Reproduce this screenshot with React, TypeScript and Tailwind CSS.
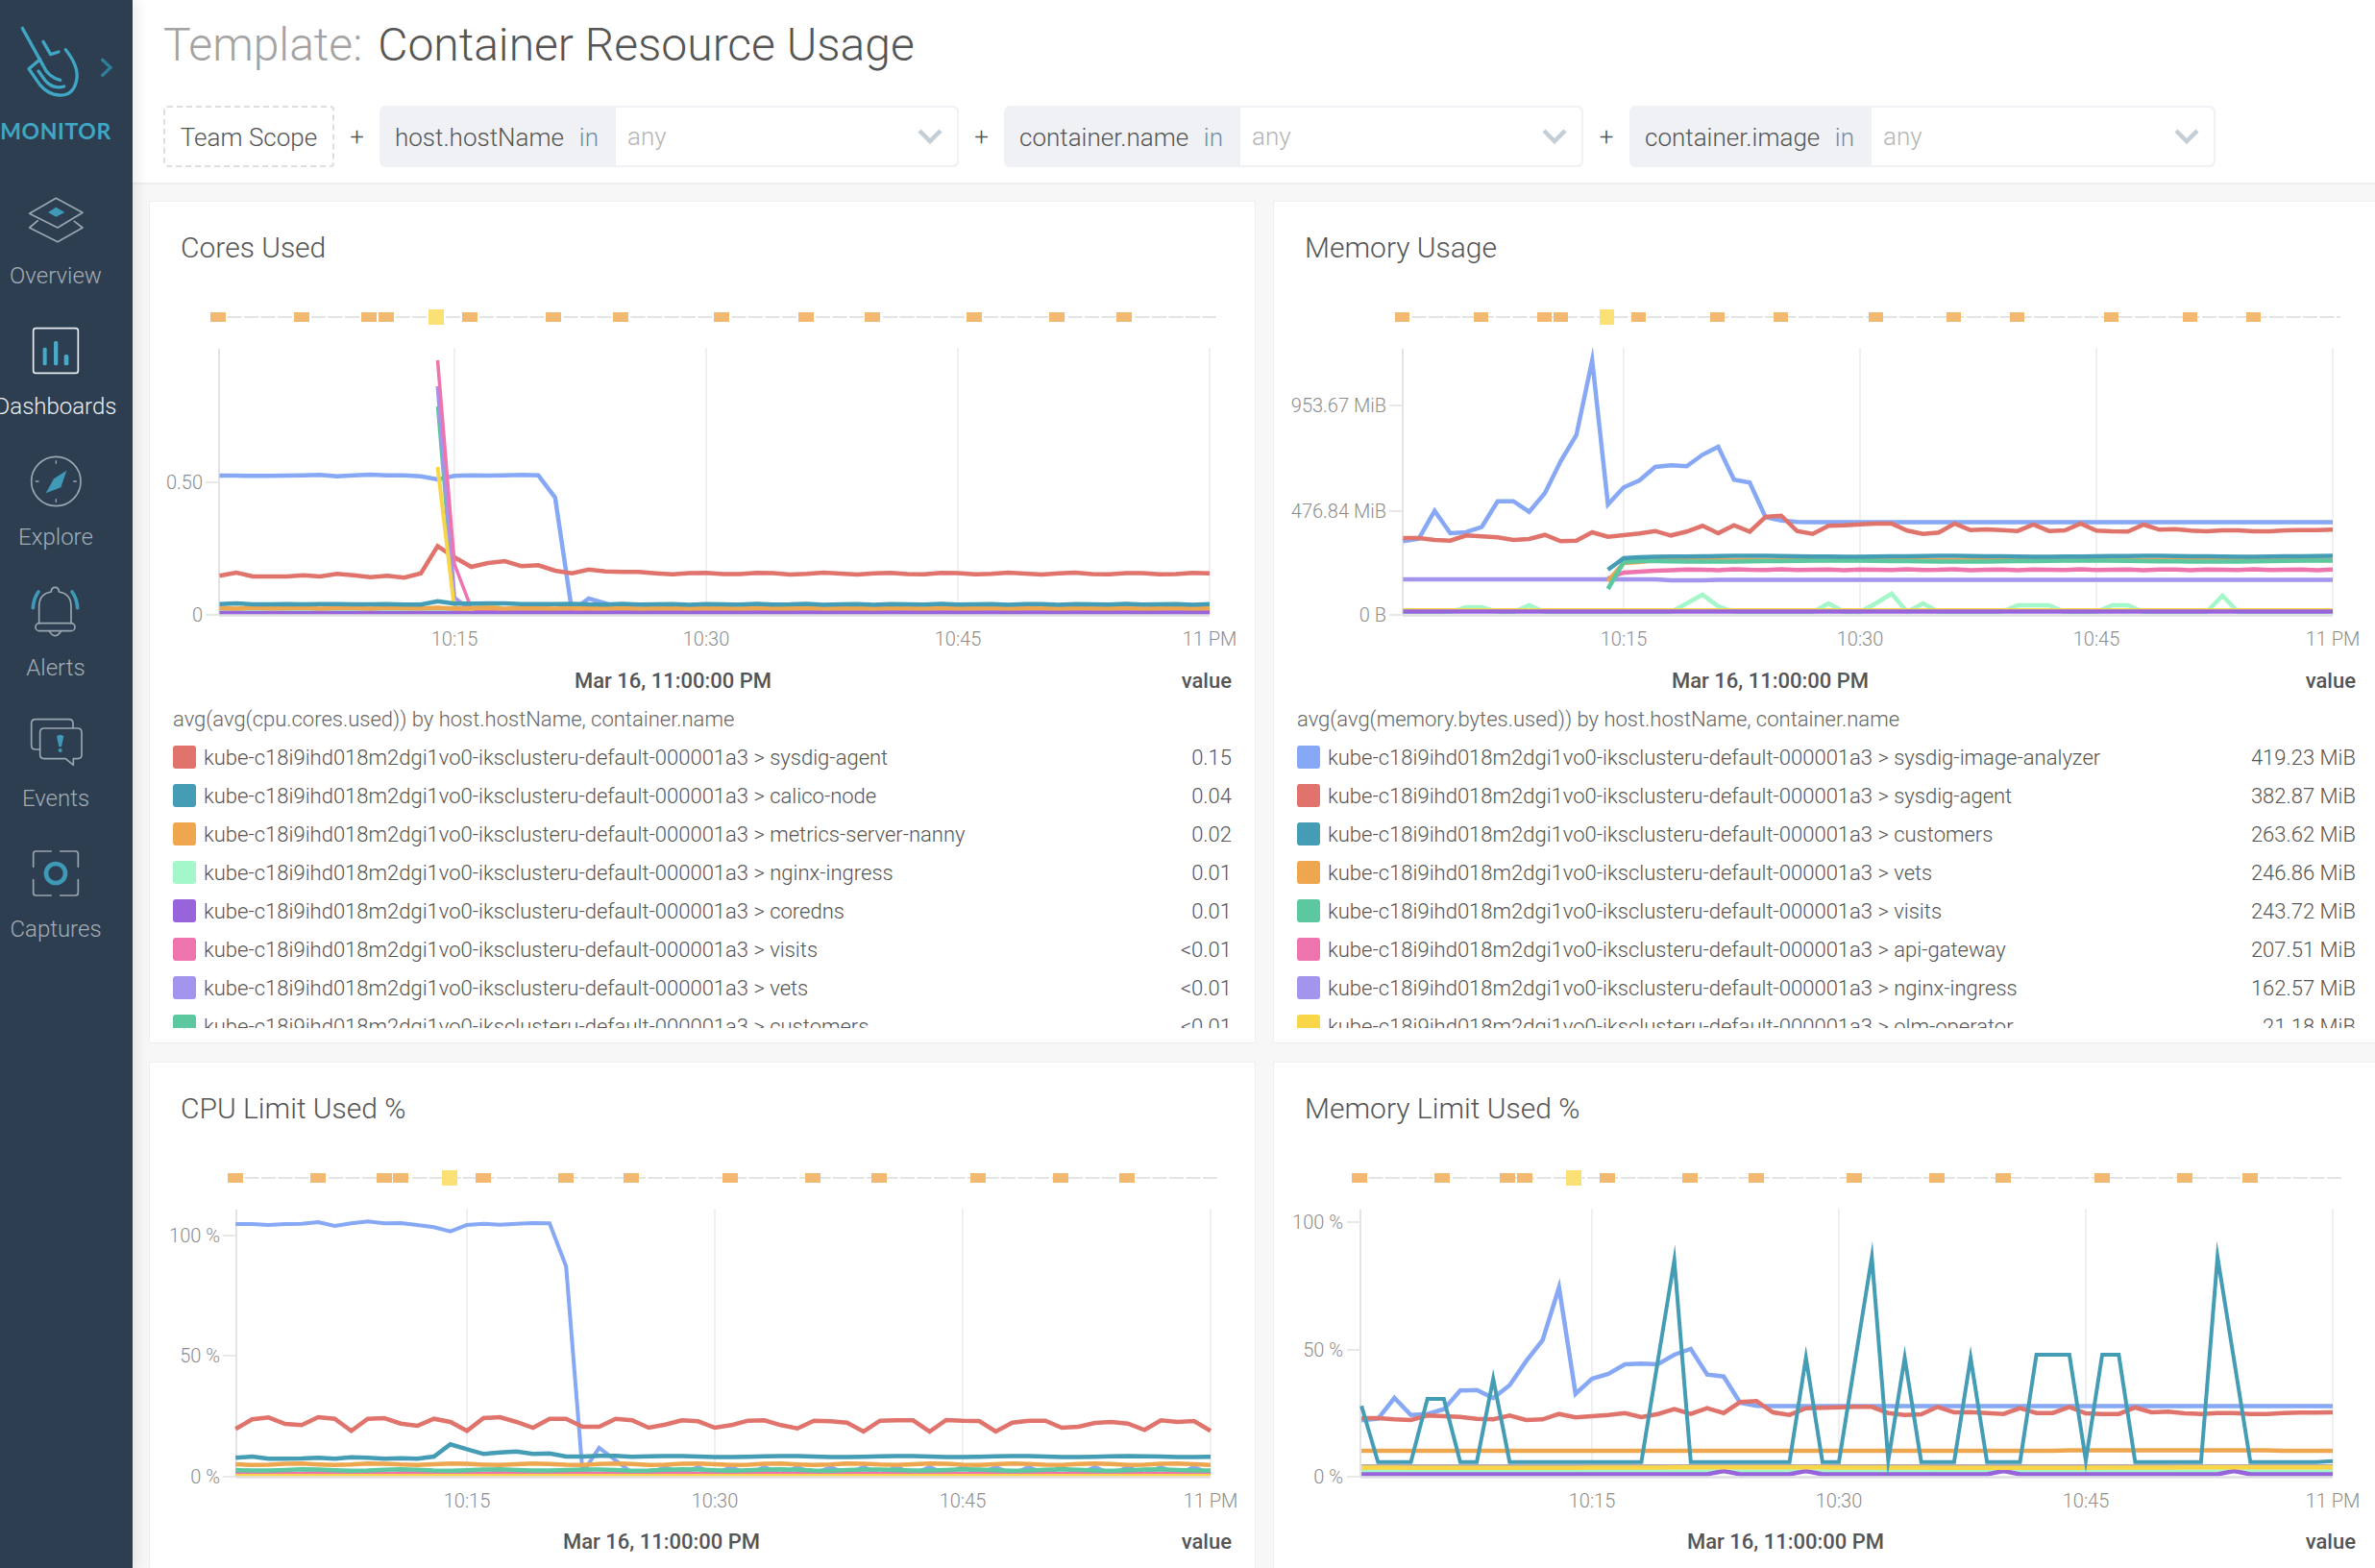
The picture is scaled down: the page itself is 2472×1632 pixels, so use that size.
import React from "react";

const C = { red: "#e0736b", teal: "#449db5", orange: "#eea64f", mint: "#a3f7c8", violet: "#9764dc", pink: "#ee74ad", peri: "#a394ee", green: "#5cc8a0", yellow: "#f8d648", blue: "#86a8f5" };

type V = number | null;
type S = { c: string; w?: number; y: V[] };
const N = 60;
const wob = (v: number, a = 0.6, k = 2.3): number[] => Array.from({ length: N }, (_, i) => v + a * Math.sin(i * k));
const pad = (a: V[], v: number | number[]): V[] => Array.from({ length: N }, (_, i) => (i < a.length ? a[i] : Array.isArray(v) ? v[i] : v));
const nulls = (n: number): V[] => Array.from({ length: n }, () => null);
const z3 = (base: number, a: number[]) => a.map((v) => base + v / 3);
const bumps = (v: number, m: Record<number, number>): number[] => Array.from({ length: N }, (_, i) => (m[i] !== undefined ? m[i] : v));

const cores: S[] = [
  { c: C.blue, y: pad([...z3(300, [585, 585, 586, 586, 585, 584, 583, 587, 584, 582, 584, 584, 587, 597, 586, 584, 585, 584, 583, 584]), 518, 636, 623, 628, 634], 638) },
  { c: C.red, y: pad(z3(300, [898, 888, 900, 900, 900, 896, 900, 892, 896, 902, 898, 904, 890, 805, 840, 870, 858, 852, 868, 865, 882, 890, 878, 884, 886, 886, 890]), wob(597, 0.9, 1.7)) },
  { c: C.mint, y: bumps(636, { 15: 633, 16: 630, 17: 634, 22: 635 }) },
  { c: C.green, w: 3.5, y: pad([...nulls(13), 423, 632, 636], 636) },
  { c: C.peri, w: 4, y: pad([...nulls(13), 402, 622, 635, 637], 638) },
  { c: C.yellow, w: 4, y: pad([...nulls(13), 486, 634, 637, 628, 637, 638, 638, 638, 638, 632, 638], 638) },
  { c: C.pink, w: 3.5, y: pad([...nulls(13), 375, 587, 633, 637], 637) },
  { c: C.orange, y: wob(633, 0.5) },
  { c: C.teal, y: pad(z3(300, [986, 984, 987, 987, 986, 987, 986, 986, 987, 987, 986, 988, 988, 977, 985, 985, 984, 984, 986, 986, 986]), wob(629, 0.4)) },
  { c: C.violet, y: wob(638, 0) },
];

const memBlue = z3(300, [790, 782, 695, 765, 762, 745, 665, 665, 698, 640, 540, 458, 225, 675, 622, 600, 558, 553, 556, 520, 495, 598, 607, 715, 725, 730]);
const memRed = z3(300, [780, 780, 786, 788, 772, 775, 778, 786, 783, 770, 790, 788, 762, 776, 771, 766, 758, 772, 760, 742, 765, 740, 760, 714, 710, 758, 767, 742, 740, 737, 735, 735, 757, 767, 763, 735, 755, 753, 755, 758, 738, 758, 756, 735, 757, 759, 760, 738, 754, 752, 757, 759, 756, 756, 759, 759, 756, 755, 755, 754]);
const memory: S[] = [
  { c: C.mint, y: bumps(637, { 4: 632, 5: 632, 8: 630, 19: 619, 18: 628, 20: 631, 27: 628, 30: 628, 31: 618, 33: 628, 39: 630, 40: 630, 41: 630, 45: 630, 46: 630, 52: 620 }) },
  { c: C.yellow, w: 2, y: wob(634, 0) },
  { c: C.violet, y: wob(636.5, 0) },
  { c: C.peri, y: pad([603, 603, 603, 603, 603, 603, 603, 603, 603, 603, 603, 603, 603, 603, 603, 603, 603, 604, 604, 604], 603.5) },
  { c: C.pink, y: pad([...nulls(13), 602, 596, 595, 594, 593.5], wob(593, 0.4)) },
  { c: C.orange, y: pad([...nulls(13), 605, 586, 585], 583) },
  { c: C.green, y: pad([...nulls(13), 613, 585, 584], wob(584, 0.5, 0.4)) },
  { c: C.teal, y: pad([...nulls(13), 593, 581, 580], wob(579, 0.4, 0.5)) },
  { c: C.blue, y: pad(memBlue, 543.5) },
  { c: C.red, y: memRed },
];

const cpuRed = z3(1200, [862, 832, 826, 846, 850, 825, 830, 868, 830, 828, 845, 852, 830, 840, 868, 828, 825, 840, 858, 830, 830, 855, 855, 830, 835, 858, 848, 835, 838, 858, 850, 836, 835, 850, 860, 836, 838, 842, 870, 836, 835, 835, 870, 834, 836, 837, 870, 842, 836, 836, 858, 855, 843, 840, 845, 865, 835, 840, 837, 868]);
const cpuBlueBump = Array.from({ length: N }, (_, i) => (i >= 25 && i % 2 === 0 ? 1527 : 1534));
const cpu: S[] = [
  { c: C.blue, w: 4, y: pad([...z3(1200, [222, 222, 225, 222, 221, 216, 228, 220, 214, 220, 219, 225, 232, 245, 225, 221, 224, 221, 219, 220]), 1318, 1533, 1507, 1520, 1533], cpuBlueBump) },
  { c: C.pink, w: 3, y: wob(1533, 0.6) },
  { c: C.yellow, w: 3, y: wob(1535.5, 0) },
  { c: C.green, y: wob(1530, 0.7, 1.1) },
  { c: C.orange, y: wob(1524, 0.8, 1.3) },
  { c: C.teal, y: pad(z3(1200, [952, 948, 955, 955, 954, 952, 955, 950, 952, 955, 953, 955, 948, 910, 925, 940, 935, 932, 940, 938, 948, 948, 946, 946]), wob(1516, 0.5, 0.9)) },
  { c: C.red, y: cpuRed },
];

const limTeal = [790, 965, 965, 965, 768, 768, 965, 965, 705, 965, 965, 965, 965, 965, 965, 965, 965, 965, 650, 335, 965, 965, 965, 965, 965, 965, 965, 640, 965, 965, 645, 325, 960, 640, 965, 965, 965, 640, 965, 965, 965, 630, 630, 630, 960, 630, 630, 965, 965, 965, 965, 965, 325, 645, 965, 965, 965, 965, 965, 962];
const limBlue = [835, 830, 765, 818, 815, 800, 742, 740, 765, 725, 650, 585, 420, 752, 705, 690, 660, 658, 660, 630, 612, 692, 698, 780, 790];
const limRed = [828, 828, 832, 834, 820, 822, 824, 830, 832, 820, 834, 832, 815, 826, 822, 818, 812, 825, 815, 800, 815, 797, 812, 778, 775, 810, 818, 797, 796, 794, 793, 793, 812, 818, 816, 793, 810, 809, 812, 815, 797, 812, 812, 793, 813, 815, 815, 795, 810, 808, 813, 815, 812, 812, 815, 815, 812, 811, 811, 810];
const limit: S[] = [
  { c: C.mint, y: wob(1531.5, 0) },
  { c: C.violet, y: bumps(1534.5, { 22: 1531, 27: 1531, 39: 1531, 53: 1531 }) },
  { c: "#b5a6b0", w: 2, y: wob(1525, 0) },
  { c: C.yellow, y: wob(1527.5, 0.3, 0.2) },
  { c: C.orange, y: pad([], Array.from({ length: N }, (_, i) => (i > 42 && i < 56 ? 1509.5 : 1510))) },
  { c: C.blue, y: pad(z3(1200, limBlue), 1463.5) },
  { c: C.red, y: z3(1200, limRed) },
  { c: C.teal, w: 4, y: z3(1200, limTeal) },
];

type ChartProps = {
  vb: string; x0: number; xs: [number, number, number, number]; top: number; bottom: number; sq?: number;
  ticks: [string, number][]; evY: number; evEnd: number; squares: number[]; yellow: number; labelRight: number; series: S[];
};

function Chart({ vb, x0, xs, top, bottom, ticks, evY, evEnd, squares, yellow, labelRight, series, sq = 16 }: ChartProps) {
  const step = (xs[3] - xs[0]) / 45;
  const px = (i: number) => xs[3] - (N - 1 - i) * step;
  const start = squares[0];
  const labels = ["10:15", "10:30", "10:45", "11 PM"];
  return (
    <svg viewBox={vb} width={1150} height={380} className="block shrink-0">
      <line x1={start} x2={evEnd} y1={evY} y2={evY} stroke="#e4e4e4" strokeWidth={2} strokeDasharray="15 2.5" />
      {squares.map((s) => (
        <rect key={s} x={s} y={evY - 5} width={sq} height={10} fill="#f4b970" />
      ))}
      <rect x={yellow} y={evY - 8} width={sq} height={16} fill="#fbe073" />
      <line x1={x0} x2={x0} y1={top} y2={bottom} stroke="#e3e3e3" strokeWidth={2} />
      {xs.map((x) => (
        <line key={x} x1={x} x2={x} y1={top - 1} y2={bottom} stroke="#ebebeb" strokeWidth={1.5} />
      ))}
      {ticks.map(([t, y]) => (
        <g key={t}>
          <line x1={x0 - 14} x2={x0} y1={y} y2={y} stroke="#e8e8e8" strokeWidth={2} />
          <text x={labelRight} y={y + 7} textAnchor="end" className="fill-[#8c8c8c] text-[20px] font-light">{t}</text>
        </g>
      ))}
      {series.map((s, k) => {
        const pts = s.y.map((v, i) => (v === null ? "" : `${px(i).toFixed(1)},${v.toFixed(1)}`)).filter(Boolean).join(" ");
        return <polyline key={k} points={pts} fill="none" stroke={s.c} strokeWidth={s.w ?? 4.5} strokeLinejoin="miter" strokeMiterlimit={12} />;
      })}
      <line x1={x0} x2={xs[3]} y1={bottom + 0.5} y2={bottom + 0.5} stroke="#dfdfe3" strokeWidth={2.5} />
      {xs.map((x, i) => (
        <text key={x} x={x} y={bottom + 32} textAnchor="middle" className="fill-[#8c8c8c] text-[20px] font-light">{labels[i]}</text>
      ))}
    </svg>
  );
}

type Row = [string, string, string];
const HOST = "kube-c18i9ihd018m2dgi1vo0-iksclusteru-default-000001a3";

function Panel({ title, dateMl, chart, heading, rows }: { title: string; dateMl: string; chart: React.ReactNode; heading?: string; rows?: Row[] }) {
  return (
    <div className="h-[877px] w-[1152px] overflow-hidden border border-[#efefef] bg-white">
      <div className="h-[100px] pl-[32px] pt-[30px] text-[30px] font-light leading-[36px] text-[#555]">{title}</div>
      {chart}
      <div className="flex h-[36px] items-center pl-[24px] pr-[24px] text-[22px] font-medium text-[#555]">
        <span className={dateMl}>Mar 16, 11:00:00 PM</span>
        <span className="ml-auto">value</span>
      </div>
      {heading && rows && (
        <div className="mt-[8px] h-[336px] overflow-hidden px-[24px] font-light">
          <div className="h-[28px] text-[22px] leading-[29px] text-[#666]">{heading}</div>
          <div className="mt-[6px] flex flex-col">
            {rows.map(([c, n, v]) => (
              <div key={n} className="flex h-[40px] shrink-0 items-center text-[22px] text-[#555]">
                <span className="mr-[8px] h-[24px] w-[24px] shrink-0 rounded-[3px]" style={{ background: c }} />
                <span className="pt-[1px]">{HOST} &gt; {n}</span>
                <span className="ml-auto pt-[1px]">{v}</span>
              </div>
            ))}
          </div>
        </div>
      )}
    </div>
  );
}

function Chip({ label, w, labelW }: { label: string; w: string; labelW: string }) {
  return (
    <div className={`flex h-[64px] overflow-hidden rounded-[6px] bg-[#eff1f5] p-[2px] pl-0 ${w}`}>
      <div className={`flex shrink-0 items-center justify-between pl-[16px] pr-[18px] pt-[2px] text-[26px] font-light text-[#555] ${labelW}`}>
        <span>{label}</span>
        <span className="text-[#6f8ca3]">in</span>
      </div>
      <div className="flex flex-1 items-center justify-between rounded-r-[5px] bg-white pl-[12px] pr-[15px] text-[26px] font-light text-[#b5b5b5]">
        <span>any</span>
        <svg width="26" height="16" viewBox="0 0 26 16"><path d="M2 2 L13 13 L24 2" fill="none" stroke="#c3ced6" strokeWidth="4.5" /></svg>
      </div>
    </div>
  );
}

const ST = "#9aa6b0";
const TEAL = "#3f9ab8";

function NavItem({ label, active, vb, children }: { label: string; active?: boolean; vb: number; children: React.ReactNode }) {
  return (
    <div className="flex h-[136px] w-[116px] shrink-0 flex-col items-center">
      <svg width="60" height="60" viewBox={`84 ${vb - 90} 180 180`} fill="none" stroke={active ? "#e9edf0" : ST} strokeWidth={5} strokeLinejoin="round" strokeLinecap="round">
        {children}
      </svg>
      <span className={`mt-[14px] whitespace-nowrap text-[24px] font-light leading-[28px] ${active ? "text-[#eceff2]" : "text-[#a3adb6]"}`}>{label}</span>
    </div>
  );
}

function Sidebar() {
  return (
    <aside className="z-10 flex h-[1632px] w-[138px] shrink-0 flex-col overflow-hidden bg-[#2d3e50] shadow-[6px_0_12px_rgba(0,0,0,0.07)]">
      <div className="h-[199px] shrink-0 pt-[20px]">
        <svg width="138" height="85" viewBox="0 60 414 255" fill="none" stroke="#3fa7c4" strokeWidth={10} strokeLinecap="round" strokeLinejoin="round">
          <path d="M70 88 L135 205 Q150 240 188 250" />
          <path d="M135 130 L158 170 L183 162" />
          <path d="M205 155 Q245 205 240 245 Q232 300 185 297 Q150 295 125 265 L90 215 L125 185" />
          <path d="M120 222 L140 250 Q165 280 200 270" />
          <path d="M317 184 L345 211 L317 238" stroke="#2f7f99" strokeLinecap="butt" strokeLinejoin="miter" strokeWidth={10} />
        </svg>
        <div className="mt-[18px] w-[116px] whitespace-nowrap text-center text-[23px] font-bold leading-[26px] tracking-[0.6px] text-[#3fa7c4] [font-family:Lato,sans-serif]">MONITOR</div>
      </div>
      <NavItem label="Overview" vb={688}>
        <path d="M175 620 L258 665 L180 712 L92 668 Z" />
        <path d="M118 690 L92 712 L180 756 L258 712 L232 692" />
        <path d="M175 648 L202 664 L175 678 L150 664 Z" fill={TEAL} stroke="none" />
      </NavItem>
      <NavItem label="Dashboards" active vb={1098}>
        <rect x="104" y="1028" width="140" height="140" rx="8" />
        <rect x="134" y="1088" width="12" height="56" rx="5" fill="#46aac8" stroke="none" />
        <rect x="168" y="1068" width="13" height="76" rx="5" fill="#46aac8" stroke="none" />
        <rect x="200" y="1110" width="14" height="34" rx="5" fill="#46aac8" stroke="none" />
      </NavItem>
      <NavItem label="Explore" vb={1506}>
        <circle cx="175" cy="1506" r="77" />
        <path d="M175 1442 V1450 M175 1562 V1570 M112 1506 H120 M230 1506 H238" strokeWidth={4} />
        <path d="M208 1472 L190 1525 L143 1543 L168 1498 Z" fill={TEAL} stroke="none" />
      </NavItem>
      <NavItem label="Alerts" vb={415}>
        <path d="M122 450 V398 Q122 358 160 352 Q160 338 172 338 Q184 338 184 352 Q222 358 222 398 V450" />
        <rect x="111" y="450" width="123" height="24" rx="12" />
        <path d="M155 476 Q172 502 190 476" />
        <path d="M103 402 Q105 372 120 352 M242 402 Q240 372 225 352" stroke={TEAL} strokeWidth={11} />
      </NavItem>
      <NavItem label="Events" vb={825}>
        <path d="M228 778 V765 Q228 752 215 752 H111 Q98 752 98 765 V833 Q98 846 111 846 H125" />
        <path d="M138 780 H242 Q255 780 255 793 V862 Q255 875 242 875 H229 V895 L205 875 H138 Q125 875 125 862 V793 Q125 780 138 780 Z" />
        <path d="M177 805 Q188 795 199 805 L192 838 H184 Z" fill={TEAL} stroke="none" />
        <circle cx="188" cy="849" r="6" fill={TEAL} stroke="none" />
      </NavItem>
      <NavItem label="Captures" vb={1230}>
        <path d="M160 1161 H112 Q104 1161 104 1169 V1210 M188 1161 H236 Q244 1161 244 1169 V1210 M104 1250 V1291 Q104 1299 112 1299 H160 M244 1250 V1291 Q244 1299 236 1299 H188" />
        <circle cx="174" cy="1230" r="30" stroke={TEAL} strokeWidth={14} />
      </NavItem>
    </aside>
  );
}

export default function App() {
  return (
    <div className="flex h-[1632px] w-[2472px] overflow-hidden bg-[#f7f7f7] [font-family:Roboto,sans-serif]">
      <Sidebar />
      <main className="min-w-0 flex-1 overflow-hidden">
        <header className="h-[192px] border-b-2 border-[#eeeeee] bg-white pl-[32px]">
          <h1 className="flex h-[110px] items-center gap-[16px] pb-[16px] text-[48px] font-light leading-none">
            <span className="text-[#a3a3a3]">Template:</span>
            <span className="text-[#555]">Container Resource Usage</span>
          </h1>
          <div className="flex items-center text-[26px] font-light text-[#555]">
            <div className="flex h-[64px] w-[178px] items-center justify-center rounded-[4px] border-2 border-dashed border-[#dedede] pt-[2px]">Team Scope</div>
            <span className="w-[47px] text-center">+</span>
            <Chip label="host.hostName" w="w-[603px]" labelW="w-[246px]" />
            <span className="w-[47px] text-center">+</span>
            <Chip label="container.name" w="w-[603px]" labelW="w-[246px]" />
            <span className="w-[48px] text-center">+</span>
            <Chip label="container.image" w="w-[610px]" labelW="w-[252px]" />
          </div>
        </header>
        <div className="grid w-[2340px] grid-cols-[1152px_1152px] gap-x-[18px] gap-y-[19px] pl-[17px] pt-[17px]">
          <Panel
            title="Cores Used"
            dateMl="ml-[418px]"
            heading="avg(avg(cpu.cores.used)) by host.hostName, container.name"
            rows={[
              [C.red, "sysdig-agent", "0.15"],
              [C.teal, "calico-node", "0.04"],
              [C.orange, "metrics-server-nanny", "0.02"],
              [C.mint, "nginx-ingress", "0.01"],
              [C.violet, "coredns", "0.01"],
              [C.pink, "visits", "<0.01"],
              [C.peri, "vets", "<0.01"],
              [C.green, "customers", "<0.01"],
            ]}
            chart={<Chart vb="156 310 1150 380" x0={228} xs={[473, 735, 997, 1259]} top={363} bottom={640} ticks={[["0.50", 502], ["0", 640]]} labelRight={211} evY={330} evEnd={1266} squares={[219, 306, 376, 394, 481, 568, 638, 743, 831, 900, 1006, 1092, 1162]} yellow={446} series={cores} />}
          />
          <Panel
            title="Memory Usage"
            dateMl="ml-[390px]"
            heading="avg(avg(memory.bytes.used)) by host.hostName, container.name"
            rows={[
              [C.blue, "sysdig-image-analyzer", "419.23 MiB"],
              [C.red, "sysdig-agent", "382.87 MiB"],
              [C.teal, "customers", "263.62 MiB"],
              [C.orange, "vets", "246.86 MiB"],
              [C.green, "visits", "243.72 MiB"],
              [C.pink, "api-gateway", "207.51 MiB"],
              [C.peri, "nginx-ingress", "162.57 MiB"],
              [C.yellow, "olm-operator", "21.18 MiB"],
            ]}
            chart={<Chart vb="1326 310 1150 380" x0={1460} xs={[1690, 1936, 2182, 2428]} top={363} bottom={640} sq={15} ticks={[["953.67 MiB", 422], ["476.84 MiB", 532], ["0 B", 640]]} labelRight={1443} evY={330} evEnd={2436} squares={[1452, 1534, 1600, 1617, 1698, 1780, 1846, 1945, 2026, 2092, 2190, 2272, 2338]} yellow={1665} series={memory} />}
          />
          <Panel
            title="CPU Limit Used %"
            dateMl="ml-[406px]"
            chart={<Chart vb="156 1206 1150 380" x0={246} xs={[486, 744, 1002, 1260]} top={1259} bottom={1537} ticks={[["100 %", 1286], ["50 %", 1411], ["0 %", 1537]]} labelRight={229} evY={1226} evEnd={1267} squares={[237, 323, 392, 409, 495, 581, 649, 752, 838, 907, 1010, 1096, 1165]} yellow={460} series={cpu} />}
          />
          <Panel
            title="Memory Limit Used %"
            dateMl="ml-[406px]"
            chart={<Chart vb="1326 1206 1150 380" x0={1416} xs={[1657, 1914, 2171, 2428]} top={1259} bottom={1537} ticks={[["100 %", 1272], ["50 %", 1405], ["0 %", 1537]]} labelRight={1398} evY={1226} evEnd={2437} squares={[1407, 1493, 1561, 1579, 1665, 1751, 1820, 1922, 2008, 2077, 2180, 2266, 2334]} yellow={1630} series={limit} />}
          />
        </div>
      </main>
    </div>
  );
}
